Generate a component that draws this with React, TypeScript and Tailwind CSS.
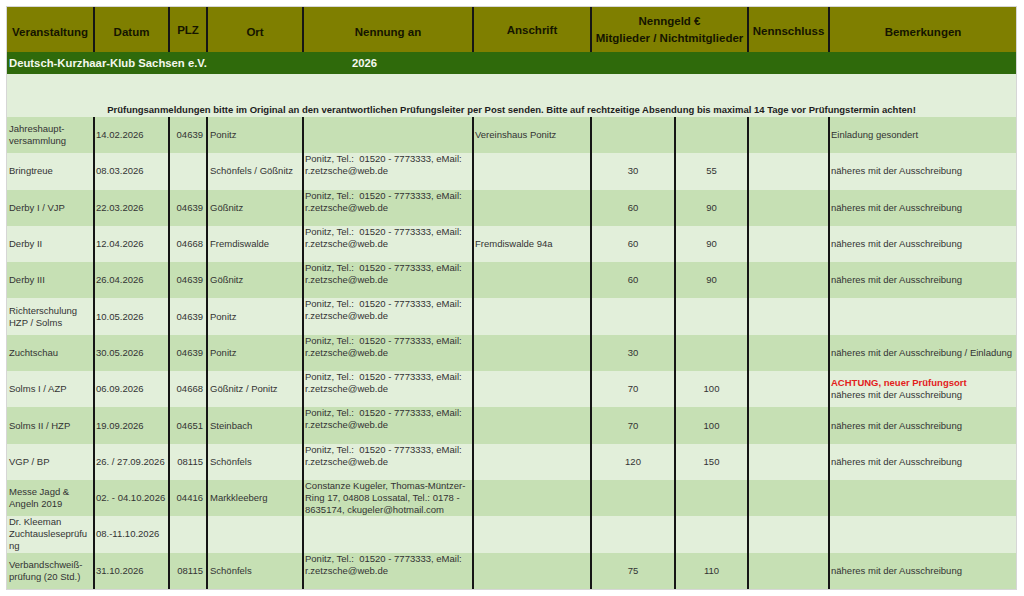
const FONT = "font-['Liberation_Sans','Arial',sans-serif]";

const P = ["Ponitz, Tel.:\u00a0 01520 - 7773333, eMail:", "r.zetzsche@web.de"];

type Row = {
  name: string[];
  date: string;
  plz: string;
  ort: string;
  nennung: string[];
  anschrift: string;
  mit: string;
  nicht: string;
  schluss: string;
  bem: string[];
  warn?: string;
};

const rows: Row[] = [
  { name: ["Jahreshaupt-", "versammlung"], date: "14.02.2026", plz: "04639", ort: "Ponitz", nennung: [], anschrift: "Vereinshaus Ponitz", mit: "", nicht: "", schluss: "", bem: ["Einladung gesondert"] },
  { name: ["Bringtreue"], date: "08.03.2026", plz: "", ort: "Schönfels / Gößnitz", nennung: P, anschrift: "", mit: "30", nicht: "55", schluss: "", bem: ["näheres mit der Ausschreibung"] },
  { name: ["Derby I / VJP"], date: "22.03.2026", plz: "04639", ort: "Gößnitz", nennung: P, anschrift: "", mit: "60", nicht: "90", schluss: "", bem: ["näheres mit der Ausschreibung"] },
  { name: ["Derby II"], date: "12.04.2026", plz: "04668", ort: "Fremdiswalde", nennung: P, anschrift: "Fremdiswalde 94a", mit: "60", nicht: "90", schluss: "", bem: ["näheres mit der Ausschreibung"] },
  { name: ["Derby III"], date: "26.04.2026", plz: "04639", ort: "Gößnitz", nennung: P, anschrift: "", mit: "60", nicht: "90", schluss: "", bem: ["näheres mit der Ausschreibung"] },
  { name: ["Richterschulung", "HZP / Solms"], date: "10.05.2026", plz: "04639", ort: "Ponitz", nennung: P, anschrift: "", mit: "", nicht: "", schluss: "", bem: [] },
  { name: ["Zuchtschau"], date: "30.05.2026", plz: "04639", ort: "Ponitz", nennung: P, anschrift: "", mit: "30", nicht: "", schluss: "", bem: ["näheres mit der Ausschreibung / Einladung"] },
  { name: ["Solms I / AZP"], date: "06.09.2026", plz: "04668", ort: "Gößnitz / Ponitz", nennung: P, anschrift: "", mit: "70", nicht: "100", schluss: "", bem: ["näheres mit der Ausschreibung"], warn: "ACHTUNG, neuer Prüfungsort" },
  { name: ["Solms II / HZP"], date: "19.09.2026", plz: "04651", ort: "Steinbach", nennung: P, anschrift: "", mit: "70", nicht: "100", schluss: "", bem: ["näheres mit der Ausschreibung"] },
  { name: ["VGP / BP"], date: "26. / 27.09.2026", plz: "08115", ort: "Schönfels", nennung: P, anschrift: "", mit: "120", nicht: "150", schluss: "", bem: ["näheres mit der Ausschreibung"] },
  { name: ["Messe Jagd &", "Angeln 2019"], date: "02. - 04.10.2026", plz: "04416", ort: "Markkleeberg", nennung: ["Constanze Kugeler, Thomas-Müntzer-", "Ring 17, 04808 Lossatal, Tel.: 0178 -", "8635174, ckugeler@hotmail.com"], anschrift: "", mit: "", nicht: "", schluss: "", bem: [] },
  { name: ["Dr. Kleeman", "Zuchtausleseprüfu", "ng"], date: "08.-11.10.2026", plz: "", ort: "", nennung: [], anschrift: "", mit: "", nicht: "", schluss: "", bem: [] },
  { name: ["Verbandschweiß-", "prüfung (20 Std.)"], date: "31.10.2026", plz: "08115", ort: "Schönfels", nennung: P, anschrift: "", mit: "75", nicht: "110", schluss: "", bem: ["näheres mit der Ausschreibung"] },
];

const GRID = "grid grid-cols-[86px_75px_38px_96px_170px_118px_84px_73px_81px_188px]";

function Lines({ lines }: { lines: string[] }) {
  return (
    <div>
      {lines.map((l, i) => (
        <div key={i} className="whitespace-nowrap">{l}</div>
      ))}
    </div>
  );
}

export default function App() {
  return (
    <div className={`min-h-[596px] bg-white pt-[6px] pl-[6px] ${FONT}`}>
      <div className="w-[1011px] border border-[#d6d6d6]">
        {/* header */}
        <div className={`${GRID} h-[45px] bg-[#7f7f00] text-[11.5px] font-bold leading-[17px] text-[#151500]`}>
          <div className="flex items-center justify-center pt-[6px]">Veranstaltung</div>
          <div className="flex items-center justify-center border-l-2 border-[#151515] pt-[6px]">Datum</div>
          <div className="flex items-center justify-center border-l-2 border-[#151515] pt-[2px]">PLZ</div>
          <div className="flex items-center justify-center border-l-2 border-[#151515] pt-[6px]">Ort</div>
          <div className="flex items-center justify-center border-l-2 border-[#151515] pt-[6px]">Nennung an</div>
          <div className="flex items-center justify-center border-l-2 border-[#151515] pt-[2px]">Anschrift</div>
          <div className="col-span-2 flex flex-col items-center justify-center border-l-2 border-[#151515] text-center">
            <div>Nenngeld €</div>
            <div>Mitglieder / Nichtmitglieder</div>
          </div>
          <div className="flex items-center justify-center border-l-2 border-[#151515] pt-[4px]">Nennschluss</div>
          <div className="flex items-center justify-center border-l-2 border-[#151515] pt-[6px]">Bemerkungen</div>
        </div>

        {/* club row */}
        <div className={`${GRID} h-[22px] bg-[#2f6a0b] text-[11.3px] font-bold text-[#f4f8ee]`}>
          <div className="col-span-4 flex items-center pl-[2px]">Deutsch-Kurzhaar-Klub Sachsen e.V.</div>
          <div className="flex items-center pl-[50px]">2026</div>
          <div className="col-span-5" />
        </div>

        {/* notice row */}
        <div className="flex h-[43px] items-end justify-center bg-[#e2efda] pb-[1px] text-[9.5px] font-bold leading-[12px] text-[#1e1e1e]">
          Prüfungsanmeldungen bitte im Original an den verantwortlichen Prüfungsleiter per Post senden. Bitte auf rechtzeitige Absendung bis maximal 14 Tage vor Prüfungstermin achten!
        </div>

        {/* data rows */}
        {rows.map((r, i) => (
          <div
            key={i}
            className={`${GRID} h-[36.3px] text-[9.5px] leading-[12px] text-[#333333] ${i % 2 === 0 ? "bg-[#c6e0b4]" : "bg-[#e2efda]"}`}
          >
            <div className="flex items-center pl-[2px]">
              <Lines lines={r.name} />
            </div>
            <div className="flex items-center border-l-2 border-[#151515] pl-[1px] whitespace-nowrap">{r.date}</div>
            <div className="flex items-center justify-end border-l-2 border-[#151515] pr-[3px]">{r.plz}</div>
            <div className="flex items-center border-l-2 border-[#151515] pl-[2px] whitespace-nowrap">{r.ort}</div>
            <div className="flex items-start border-l-2 border-[#151515] pl-[1px]">
              <Lines lines={r.nennung} />
            </div>
            <div className="flex items-center border-l-2 border-[#151515] pl-[1px] whitespace-nowrap">{r.anschrift}</div>
            <div className="flex items-center justify-center border-l-2 border-[#151515]">{r.mit}</div>
            <div className="flex items-center justify-center border-l-2 border-[#151515]">{r.nicht}</div>
            <div className="flex items-center border-l-2 border-[#151515]">{r.schluss}</div>
            <div className="flex items-center border-l-2 border-[#151515] pl-[1px]">
              <div>
                {r.warn && <div className="font-bold text-[#e3211c] whitespace-nowrap">{r.warn}</div>}
                <Lines lines={r.bem} />
              </div>
            </div>
          </div>
        ))}
      </div>
    </div>
  );
}
